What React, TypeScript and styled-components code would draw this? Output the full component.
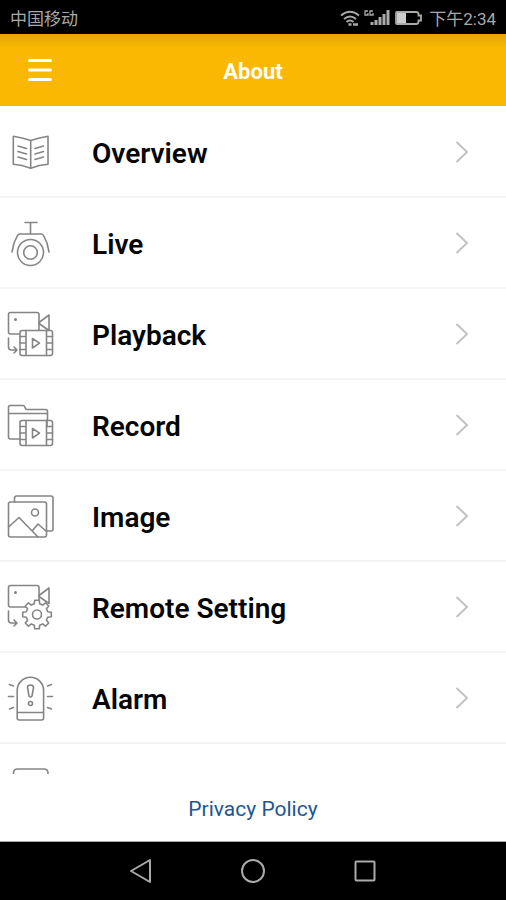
import React from "react";
import styled, { createGlobalStyle } from "styled-components";

const GlobalStyle = createGlobalStyle`
  * { box-sizing: border-box; }
  html, body, #root { height: 100%; }
  body { margin: 0; background: #fff; font-family: Roboto, "Noto Sans CJK SC", sans-serif; }
  button { font: inherit; color: inherit; background: none; border: 0; padding: 0; cursor: pointer; }
  svg { display: block; }
`;

const Screen = styled.div`
  display: flex;
  flex-direction: column;
  height: 100%;
  background: #fff;
`;

const StatusBar = styled.div`
  flex: none;
  display: flex;
  align-items: center;
  justify-content: space-between;
  height: 34px;
  padding: 3px 10px 0;
  background: #000;
  color: #a9a9a9;
  font-size: 17px;
  line-height: 24px;
`;

const StatusIcons = styled.div`
  display: flex;
  align-items: center;
  gap: 5px;
`;

const Header = styled.header`
  flex: none;
  display: grid;
  grid-template-columns: 80px 1fr 80px;
  align-items: center;
  height: 72px;
  background: linear-gradient(#e2a604, #fbb803 14px);
  color: #fff;
`;

const MenuButton = styled.button`
  display: grid;
  place-items: center;
  height: 72px;
`;

const Title = styled.h1`
  margin: 0;
  padding-top: 4px;
  text-align: center;
  font-size: 22px;
  line-height: 28px;
  font-weight: 700;
`;

const List = styled.ul`
  flex: 1;
  min-height: 0;
  margin: 0;
  padding: 1px 0 0;
  list-style: none;
  overflow-y: auto;
  scrollbar-width: none;
`;

const Item = styled.li`
  border-bottom: 2px solid #f4f4f4;
`;

const RowButton = styled.button`
  display: flex;
  align-items: center;
  width: 100%;
  height: 89px;
  padding: 0 37px 0 6px;
  text-align: left;
`;

const Label = styled.span`
  flex: 1;
  padding: 4px 0 0 38px;
  color: #050505;
  font-size: 28px;
  line-height: 32px;
  font-weight: 600;
`;

const Footer = styled.footer`
  flex: none;
  display: grid;
  place-items: center;
  height: 68px;
  padding-top: 2px;
  border-bottom: 1px solid #aaa;
`;

const PolicyLink = styled.a`
  color: #22568f;
  font-size: 21px;
  line-height: 28px;
  text-decoration: none;
`;

const NavBar = styled.nav`
  flex: none;
  display: flex;
  justify-content: center;
  align-items: center;
  gap: 80px;
  height: 58px;
  background: #000;
`;

const NavButton = styled.button`
  display: grid;
  place-items: center;
  width: 32px;
  height: 32px;
`;

const Glyph = styled.svg`
  flex: none;
  width: 48px;
  height: 48px;
  fill: none;
  stroke: #858585;
  stroke-width: 1.6;
  stroke-linecap: round;
  stroke-linejoin: round;
`;

const NavGlyph = styled.svg`
  width: 26px;
  height: 26px;
  fill: none;
  stroke: #aaa;
  stroke-width: 2;
  stroke-linejoin: round;
`;

const Film = ({ y }: { y: number }) => (
  <g transform={`translate(14 ${y})`}>
    <rect width="32.5" height="25" rx="2" fill="#fff" />
    <path d="M6 0v25M26.5 0v25M0 6h6M0 12.5h6M0 19h6M26.5 6h6M26.5 12.5h6M26.5 19h6" />
    <path d="M12.5 8v9.5l7-4.8z" />
  </g>
);

const Camera = () => (
  <>
    <rect x="2.5" y="2.5" width="30.5" height="21.5" rx="2" />
    <circle cx="9.5" cy="9.5" r="0.7" />
    <path d="M33 12.5 43 5v15.5L33 13.5M2.5 28v9q0 3 3 3h5M8 37l3 3-3 3" />
  </>
);

const gearPath = (() => {
  const points: string[] = [];
  for (let i = 0; i < 8; i++) {
    const steps: [number, number][] = [
      [-14, 11],
      [-9, 14.5],
      [9, 14.5],
      [14, 11],
    ];
    steps.forEach(([offset, radius]) => {
      const a = ((i * 45 + offset) * Math.PI) / 180;
      points.push(`${(31 + radius * Math.cos(a)).toFixed(1)} ${(31.5 + radius * Math.sin(a)).toFixed(1)}`);
    });
  }
  return `M${points.join("L")}Z`;
})();

const items: { label?: string; icon: React.ReactNode }[] = [
  {
    label: "Overview",
    icon: (
      <>
        <path d="M24.7 12.5Q16 9.5 7.3 8.3v28Q16 37 24.7 40.3Q33.4 37 42 36.3v-28Q33.4 9.5 24.7 12.5z" />
        <path d="M24.7 12.5v27.5M12 18l8.5 2.5M12 23.5l8.5 2.5M12 29l8.5 2.5M29 20.5l8.5-2.5M29 26l8.5-2.5M29 31.5l8.5-2.5" />
      </>
    ),
  },
  {
    label: "Live",
    icon: (
      <>
        <path d="M19 3.5h12M24.5 3.5V15M6 33l2-9 3.5-7.5Q12.2 15.3 13.5 15h22q1.5.3 2 1.5L41 24l2 9" />
        <circle cx="24.5" cy="33.5" r="13" />
        <circle cx="24.5" cy="33.5" r="6.8" />
      </>
    ),
  },
  { label: "Playback", icon: (<><Camera /><Film y={20.5} /></>) },
  {
    label: "Record",
    icon: (
      <>
        <path d="M14 38H4.5q-2 0-2-2V6.5q0-2 2-2H17q1.5 0 2 2t2 2h18.5q2 0 2 2V19M2.5 12.5h39" />
        <Film y={19.5} />
        <path d="M41 19.5v5" />
      </>
    ),
  },
  {
    label: "Image",
    icon: (
      <>
        <path d="M8.5 10V6q0-2 2-2H45q2 0 2 2v31q0 2-2 2h-4" />
        <rect x="2.5" y="10" width="38" height="35" rx="2" />
        <circle cx="29" cy="20.5" r="3.5" />
        <path d="m2.5 35 10.5-9.5L32 45M26.5 38.5l5.5-6.5 8.5 7.5" />
      </>
    ),
  },
  {
    label: "Remote Setting",
    icon: (
      <>
        <Camera />
        <path d={gearPath} fill="#fff" />
        <circle cx="31" cy="31.5" r="4.5" />
      </>
    ),
  },
  {
    label: "Alarm",
    icon: (
      <>
        <path d="M11.2 44V16.5a13.2 13.2 0 0 1 26.4 0V44q0 2-2 2H13.2q-2 0-2-2zM11.2 38.5h26.4" />
        <path d="M21.5 13.5q0-2.500 3-2.500t3 2.500l-1.500 8.500q-1.500 2-3 0z" />
        <circle cx="24.5" cy="29.5" r="2" />
        <path d="m3.500 10.500 4 1.500M2.500 22.500h5M3.500 35l4-1.500M45.500 10.500l-4 1.500M46.500 22.500h-5M45.500 35l-4-1.500" />
      </>
    ),
  },
  { icon: <path d="M7.500 44V8q0-4 4-4h26.500q4 0 4 4v36z" /> },
];

export default function App() {
  return (
    <Screen>
      <GlobalStyle />
      <StatusBar>
        <span>中国移动</span>
        <StatusIcons>
          <svg width="84" height="20" viewBox="0 0 84 20" fill="none" stroke="#aaa">
            <path d="M1 6.500q9-7.500 18 0M4 10q6-5 12 0M6.500 13q3.500-3 7 0" strokeWidth="2" />
            <path d="M8.500 15.500h3M13 15.500h5" strokeWidth="2.500" />
            <path d="M28 2h-3v4h3v-2M33 2h-3v4h3v-2" strokeWidth="1.300" />
            <path d="M32 16v-3M36 16v-5M40 16V8M44 16V5M48 16V1" strokeWidth="3" />
            <path d="M57 3h19q2.500 0 2.500 2v1.500h2.500v5h-2.500V13q0 2-2.500 2H57q-1 0-1-1V4q0-1 1-1z" strokeWidth="1.800" />
            <path d="M57 4h9v10h-9z" fill="#ccc" stroke="none" />
          </svg>
          <span>下午2:34</span>
        </StatusIcons>
      </StatusBar>
      <Header>
        <MenuButton type="button" aria-label="Menu">
          <svg width="26" height="26" viewBox="0 0 26 26" stroke="#fff" strokeWidth="3" strokeLinecap="round">
            <path d="M2.500 3.500h21M2.500 13h21M2.500 22.500h21" />
          </svg>
        </MenuButton>
        <Title>About</Title>
      </Header>
      <List>
        {items.map(({ label, icon }, index) => (
          <Item key={index}>
            <RowButton type="button">
              <Glyph viewBox="0 0 48 48" aria-hidden="true">{icon}</Glyph>
              <Label>{label}</Label>
              <svg width="14" height="24" viewBox="0 0 14 24" fill="none" stroke="#c2c2c2" strokeWidth="2" aria-hidden="true">
                <path d="m1.500 2 10.500 10L1.500 22" />
              </svg>
            </RowButton>
          </Item>
        ))}
      </List>
      <Footer>
        <PolicyLink href="#privacy">Privacy Policy</PolicyLink>
      </Footer>
      <NavBar>
        <NavButton type="button" aria-label="Back">
          <NavGlyph viewBox="0 0 26 26"><path d="M22 2v22L3 13z" /></NavGlyph>
        </NavButton>
        <NavButton type="button" aria-label="Home">
          <NavGlyph viewBox="0 0 26 26"><circle cx="13" cy="13" r="11" /></NavGlyph>
        </NavButton>
        <NavButton type="button" aria-label="Recent apps">
          <NavGlyph viewBox="0 0 26 26"><rect x="3.500" y="3.500" width="19" height="19" rx="1" /></NavGlyph>
        </NavButton>
      </NavBar>
    </Screen>
  );
}
